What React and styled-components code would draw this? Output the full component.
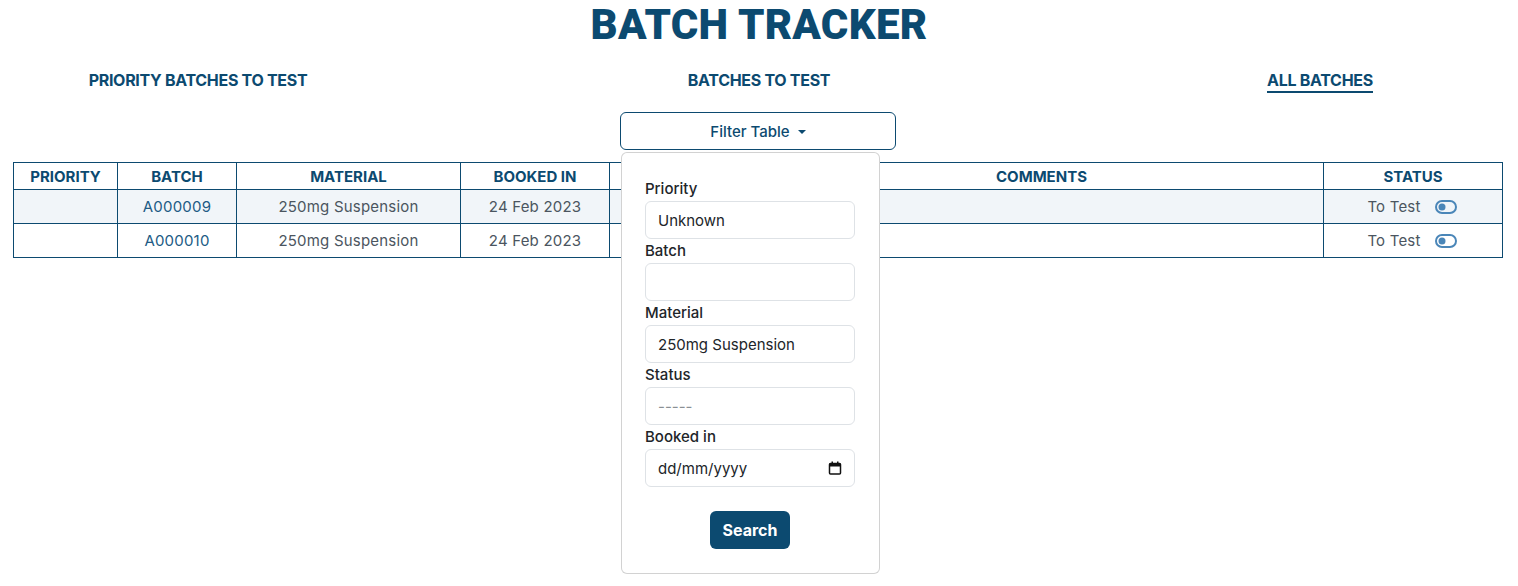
import React from 'react';
import styled, {createGlobalStyle} from 'styled-components';

const navy = '#0c4a70';

const GlobalStyle = createGlobalStyle`
  body {
    margin: 0;
    background: #fff;
    font-family: Inter, "Noto Sans", sans-serif;
    color: #212529;
  }
`

const Page = styled.div`
  display: flex;
  flex-direction: column;
  align-items: stretch;
  min-height: 100vh;
`

const Title = styled.h1`
  margin: 0;
  text-align: center;
  font-family: Roboto, "Liberation Sans", sans-serif;
  font-weight: 900;
  font-size: 42px;
  line-height: 50px;
  color: ${navy};
  letter-spacing: 0.3px;
`

const Nav = styled.nav`
  display: grid;
  grid-template-columns: 396px 1fr 396px;
  margin-top: 19px;
`

const NavLink = styled.a`
  justify-self: center;
  font-size: 16px;
  line-height: 22px;
  font-weight: 700;
  color: ${navy};
  text-decoration: none;
  border-bottom: 2px solid ${p => (p.$active ? navy : 'transparent')};
  letter-spacing: -0.3px;
`

const FilterWrap = styled.div`
  position: relative;
  align-self: center;
  margin: 19px 2px 0 0;
`

const FilterButton = styled.button`
  width: 276px;
  height: 38px;
  background: #fff;
  border: 1px solid ${navy};
  border-radius: 6px;
  font-family: inherit;
  font-size: 15px;
  font-weight: 500;
  color: ${navy};
  display: flex;
  align-items: center;
  justify-content: center;
  gap: 8px;
  cursor: pointer;
`

const Caret = styled.span`
  width: 0;
  height: 0;
  border-left: 4px solid transparent;
  border-right: 4px solid transparent;
  border-top: 4px solid ${navy};
  margin-top: 1px;
`

const Menu = styled.div`
  position: absolute;
  top: 40px;
  left: 1px;
  width: 259px;
  box-sizing: border-box;
  background: #fff;
  border: 1px solid rgba(0, 0, 0, 0.175);
  border-radius: 6px;
  padding: 24px 24px 24px 23px;
  z-index: 10;
  display: flex;
  flex-direction: column;
`

const Label = styled.label`
  font-size: 15px;
  line-height: 24px;
  font-weight: 500;
  color: #212529;
`

const Field = styled.div`
  height: 38px;
  flex: none;
  box-sizing: border-box;
  border: 1px solid #dee2e6;
  border-radius: 6px;
  padding: 0 12px;
  display: flex;
  align-items: center;
  justify-content: space-between;
  font-size: 15px;
  color: ${p => (p.$muted ? '#8a8f94' : '#212529')};
`

const SearchButton = styled.button`
  align-self: center;
  margin-top: 24px;
  width: 80px;
  height: 38px;
  border: none;
  border-radius: 6px;
  background: ${navy};
  color: #fff;
  font-family: inherit;
  font-size: 16px;
  font-weight: 700;
`

const Table = styled.table`
  margin: 12px 15px 0 13px;
  border-collapse: collapse;
  table-layout: fixed;
  width: calc(100% - 28px);
`

const Th = styled.th`
  border: 1px solid ${navy};
  height: 26px;
  padding: 0 4px;
  font-size: 15px;
  font-weight: 700;
  color: ${navy};
  text-align: center;
`

const Row = styled.tr`
  background: ${p => (p.$shaded ? '#f1f5f9' : '#fff')};
`

const Td = styled.td`
  border: 1px solid ${navy};
  height: 33px;
  padding: 0 4px;
  font-size: 15px;
  letter-spacing: 0.2px;
  color: ${p => (p.$link ? '#215b85' : '#4b5560')};
  text-align: center;
`

const StatusBox = styled.div`
  display: flex;
  align-items: center;
  justify-content: center;
  gap: 14px;
  padding-right: 2px;
`

function ToggleIcon() {
  return (
    <svg width="22" height="14" viewBox="0 0 22 14">
      <rect x="1" y="1" width="20" height="12" rx="6" fill="none" stroke="#4a86b8" strokeWidth="2" />
      <circle cx="7" cy="7" r="3.5" fill="#4a86b8" />
    </svg>
  )
}

function CalendarIcon() {
  return (
    <svg width="14" height="14" viewBox="0 0 14 14">
      <rect x="1.5" y="2.5" width="11" height="10.5" rx="1" fill="none" stroke="#111" strokeWidth="1.5" />
      <rect x="1.5" y="2.5" width="11" height="3" fill="#111" />
      <rect x="3.5" y="0.5" width="1.5" height="3" fill="#111" />
      <rect x="9" y="0.5" width="1.5" height="3" fill="#111" />
    </svg>
  )
}

const batches = [
  {id: 'A000009', material: '250mg Suspension', booked: '24 Feb 2023', status: 'To Test'},
  {id: 'A000010', material: '250mg Suspension', booked: '24 Feb 2023', status: 'To Test'},
]

export default function App() {
  return (
    <Page>
      <GlobalStyle />
      <Title>BATCH TRACKER</Title>
      <Nav>
        <NavLink>PRIORITY BATCHES TO TEST</NavLink>
        <NavLink>BATCHES TO TEST</NavLink>
        <NavLink $active>ALL BATCHES</NavLink>
      </Nav>
      <FilterWrap>
        <FilterButton>Filter Table <Caret /></FilterButton>
        <Menu>
          <Label>Priority</Label>
          <Field>Unknown</Field>
          <Label>Batch</Label>
          <Field />
          <Label>Material</Label>
          <Field>250mg Suspension</Field>
          <Label>Status</Label>
          <Field $muted>-----</Field>
          <Label>Booked in</Label>
          <Field>dd/mm/yyyy <CalendarIcon /></Field>
          <SearchButton>Search</SearchButton>
        </Menu>
      </FilterWrap>
      <Table>
        <colgroup>
          <col style={{width: 104}} />
          <col style={{width: 119}} />
          <col style={{width: 224}} />
          <col style={{width: 149}} />
          <col style={{width: 150}} />
          <col />
          <col style={{width: 179}} />
        </colgroup>
        <thead>
          <tr>
            <Th>PRIORITY</Th>
            <Th>BATCH</Th>
            <Th>MATERIAL</Th>
            <Th>BOOKED IN</Th>
            <Th></Th>
            <Th>COMMENTS</Th>
            <Th>STATUS</Th>
          </tr>
        </thead>
        <tbody>
          {batches.map((b, i) => (
            <Row key={b.id} $shaded={i === 0}>
              <Td></Td>
              <Td $link>{b.id}</Td>
              <Td>{b.material}</Td>
              <Td>{b.booked}</Td>
              <Td></Td>
              <Td></Td>
              <Td>
                <StatusBox>{b.status} <ToggleIcon /></StatusBox>
              </Td>
            </Row>
          ))}
        </tbody>
      </Table>
    </Page>
  )
}
